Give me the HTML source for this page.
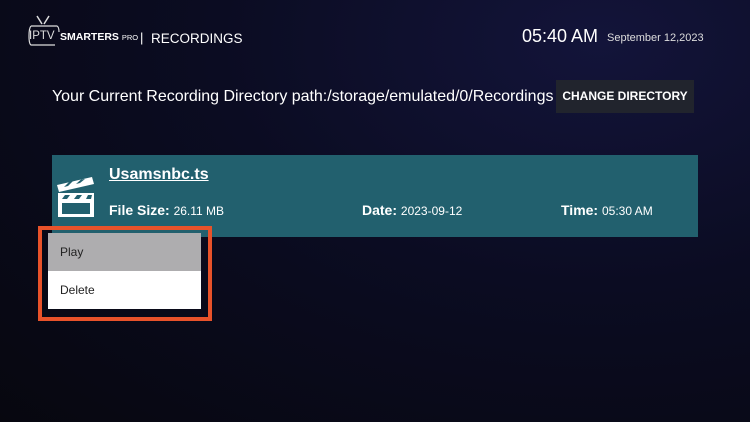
<!DOCTYPE html>
<html><head><style>
body{margin:0;width:750px;height:422px;overflow:hidden;background:radial-gradient(ellipse at 80% 10%,#13143a 0%,#0b0c22 45%,#07070f 100%);font-family:"Liberation Sans",sans-serif;color:#fff;position:relative}
.a{position:absolute;white-space:nowrap}
</style></head><body>
<svg class="a" style="left:27px;top:14px" width="34" height="36" viewBox="0 0 34 36"><path d="M10 2 L15 10 M22 2 L17 10" stroke="#ddd" stroke-width="1.5" fill="none"/><path d="M4 12 Q2 14 2 22 Q2 30 4 31 L28 31" stroke="#ddd" stroke-width="1.2" fill="none"/><path d="M4 12 L30 12 Q32 13 32 18" stroke="#ddd" stroke-width="1.2" fill="none"/></svg>
<div class="a" style="left:29px;top:30px;font-size:11.5px;color:#ddd">IPTV</div>
<div class="a" style="left:60px;top:31px;font-size:10.5px;font-weight:bold">SMARTERS <span style="font-size:7.5px;font-weight:normal">PRO</span></div>
<div class="a" style="left:140px;top:30px;font-size:13px">|</div>
<div class="a" style="left:151px;top:31px;font-size:13.5px">RECORDINGS</div>
<div class="a" style="left:522px;top:26px;font-size:18px">05:40 AM</div>
<div class="a" style="left:607px;top:32px;font-size:11px;color:#ddd">September 12,2023</div>
<div class="a" style="left:52px;top:88px;font-size:16px;letter-spacing:-0.02px">Your Current Recording Directory path:/storage/emulated/0/Recordings</div>
<div class="a" style="left:556px;top:80px;width:138px;height:33px;background:#21242d;font-size:12px;font-weight:bold;line-height:33px;text-align:center">CHANGE DIRECTORY</div>
<div class="a" style="left:52px;top:155px;width:646px;height:82px;background:#22606e"></div>
<svg class="a" style="left:56px;top:176px" width="42" height="42" viewBox="0 0 42 42">
<path d="M1 9 L36 1 L38 8 L3 16 Z" fill="#fff"/>
<path d="M8 11 L13 6 L17 5 L12 10 Z M20 8 L25 3.5 L29 3 L24 7 Z" fill="#22606e"/>
<rect x="2" y="17" width="36" height="24" fill="#fff"/>
<path d="M9 19 L14 19 L11 23 L6 23 Z M21 19 L26 19 L23 23 L18 23 Z M32 19 L36 19 L35 23 L30 23 Z" fill="#22606e"/>
<rect x="6" y="27" width="28" height="11" fill="#22606e"/>
</svg>
<div class="a" style="left:109px;top:166px;font-size:16px;font-weight:bold;text-decoration:underline">Usamsnbc.ts</div>
<div class="a" style="left:109px;top:202px;font-size:14px;font-weight:bold">File Size: <span style="font-weight:normal;font-size:12px">26.11 MB</span></div>
<div class="a" style="left:362px;top:202px;font-size:14px;font-weight:bold">Date: <span style="font-weight:normal;font-size:12px">2023-09-12</span></div>
<div class="a" style="left:561px;top:202px;font-size:14px;font-weight:bold">Time: <span style="font-weight:normal;font-size:12px">05:30 AM</span></div>
<div class="a" style="left:38px;top:226px;width:166px;height:87px;border:4px solid #e8522a"></div>
<div class="a" style="left:48px;top:233px;width:153px;height:38px;background:#aeadaf;color:#222;font-size:12px;line-height:38px;text-indent:12px">Play</div>
<div class="a" style="left:48px;top:271px;width:153px;height:38px;background:#fff;color:#222;font-size:12px;line-height:38px;text-indent:12px">Delete</div>
</body></html>
